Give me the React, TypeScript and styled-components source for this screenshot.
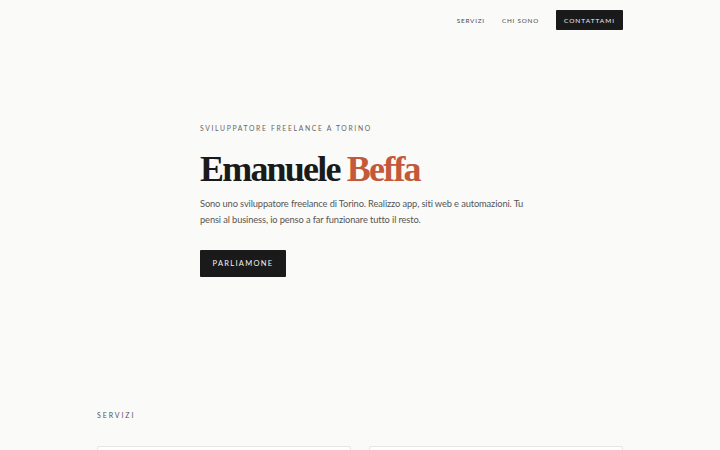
import React from 'react';
import styled, {createGlobalStyle} from 'styled-components';

const Global = createGlobalStyle`
  html, body {
    margin: 0;
    padding: 0;
    background: #FAFAF8;
  }
  body {
    font-family: "Lato", "Liberation Sans", sans-serif;
    color: #1a1a1a;
  }
`

const Page = styled.div`
  height: 450px;
  overflow: hidden;
  background: #FAFAF8;
`

const Container = styled.div`
  max-width: 526px;
  margin: 0 auto;
`

const Header = styled.header`
  display: flex;
  justify-content: flex-end;
  align-items: center;
  height: 40px;
`

const Nav = styled.nav`
  display: flex;
  align-items: center;
  gap: 17px;
`

const NavLink = styled.a`
  font-size: 6.3px;
  letter-spacing: 0.8px;
  color: #4a4a4a;
  text-transform: uppercase;
  text-decoration: none;
`

const DarkButton = styled.a<{small?: boolean}>`
  display: inline-flex;
  align-items: center;
  justify-content: center;
  background: #1a1a1a;
  color: #f2f2f2;
  text-decoration: none;
  text-transform: uppercase;
  border-radius: 1px;
  font-weight: 400;
  font-size: ${p => p.small ? '6.5px' : '7.5px'};
  letter-spacing: ${p => p.small ? '1px' : '1.3px'};
  width: ${p => p.small ? '67px' : '86px'};
  height: ${p => p.small ? '20px' : '27px'};
`

const Hero = styled.section`
  max-width: 320px;
  margin: 0 auto;
  padding: 84px 0 0;
  height: 371px;
  box-sizing: border-box;
`

const Eyebrow = styled.p`
  margin: 0;
  font-size: 6.8px;
  letter-spacing: 1.65px;
  color: #666;
  text-transform: uppercase;
`

const Title = styled.h1`
  margin: 17px 0 0;
  font-family: "Liberation Serif", "DejaVu Serif", serif;
  font-weight: 700;
  font-size: 36px;
  line-height: 40px;
  letter-spacing: -1.8px;
  color: #1a1a1a;
`

const Accent = styled.span`
  color: #C4583A;
`

const Lead = styled.p`
  margin: 7px 0 0;
  width: 328px;
  font-size: 9.3px;
  line-height: 15.5px;
  letter-spacing: -0.12px;
  color: #555;
`

const Actions = styled.div`
  margin-top: 23px;
`

const SectionLabel = styled.p`
  margin: 0;
  font-size: 7px;
  letter-spacing: 1.9px;
  color: #555;
  text-transform: uppercase;
`

const Cards = styled.div`
  display: grid;
  grid-template-columns: 1fr 1fr;
  gap: 18px;
  margin-top: 27px;
`

const Card = styled.div`
  height: 120px;
  background: #fff;
  border: 1px solid #e6e6e2;
  border-radius: 2px;
`

const App: React.FC = () => {
  return (
    <Page>
      <Global/>
      <Container>
        <Header>
          <Nav>
            <NavLink href="#servizi">Servizi</NavLink>
            <NavLink href="#chi-sono">Chi sono</NavLink>
            <DarkButton small href="#contatti">Contattami</DarkButton>
          </Nav>
        </Header>
      </Container>
      <Hero>
        <Eyebrow>Sviluppatore freelance a Torino</Eyebrow>
        <Title>Emanuele <Accent>Beffa</Accent></Title>
        <Lead>
          Sono uno sviluppatore freelance di Torino. Realizzo app, siti web e automazioni. Tu pensi al business, io penso a far funzionare tutto il resto.
        </Lead>
        <Actions>
          <DarkButton href="#contatti">Parliamone</DarkButton>
        </Actions>
      </Hero>
      <Container id="servizi">
        <SectionLabel>Servizi</SectionLabel>
        <Cards>
          <Card/>
          <Card/>
        </Cards>
      </Container>
    </Page>
  )
}

export default App
